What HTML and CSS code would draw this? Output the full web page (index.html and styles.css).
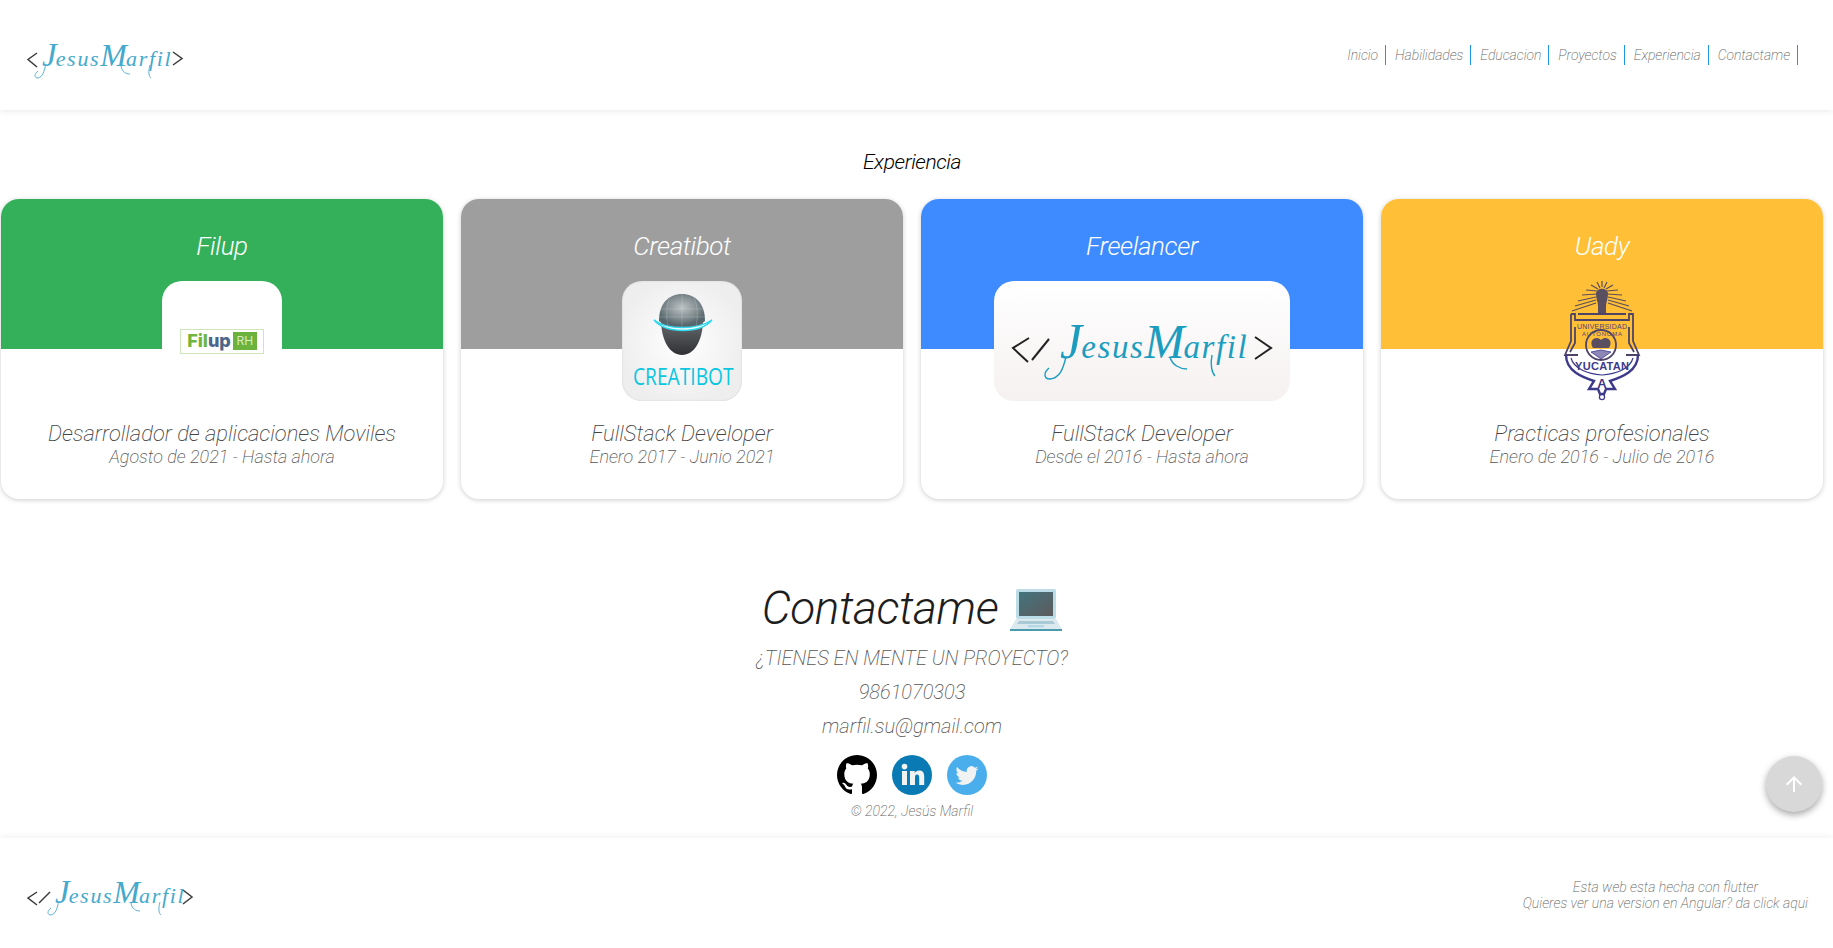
FILE: index.html
```html
<!DOCTYPE html>
<html lang="es">
<head>
<meta charset="utf-8">
<title>Jesús Marfil</title>
<link rel="stylesheet" href="styles.css">
</head>
<body>
<header class="topbar">
  <svg class="sig sig-top" viewBox="0 -8 160 48" width="160" height="48" aria-label="Jesus Marfil">
    <polyline class="chev" points="11,9 2,15.5 11,23"/>
    <polyline class="chev" points="147,8 156,14.5 147,21"/>
    <text class="sig-text" x="16" y="22" font-size="22" letter-spacing="1.7"><tspan font-size="33" letter-spacing="-1">J</tspan>esus<tspan font-size="32" letter-spacing="-1">M</tspan>arfil</text>
    <path class="sig-swash" d="M20 20 C18 27 17 33 12 34 C8 34 8 30 12 27"/>
    <path class="sig-swash" d="M124 21 C122 28 123 33 125 34 M95 22 C96 28 100 30 104 30"/>
  </svg>
  <nav class="menu">
    <a class="menu-link">Inicio</a>
    <a class="menu-link">Habilidades</a>
    <a class="menu-link">Educacion</a>
    <a class="menu-link">Proyectos</a>
    <a class="menu-link">Experiencia</a>
    <a class="menu-link">Contactame</a>
  </nav>
</header>

<main class="content">
  <h2 class="section-title">Experiencia</h2>
  <section class="cards">
    <article class="card">
      <div class="card-head head-green"><h3 class="card-title">Filup</h3></div>
      <div class="logo-box logo-white">
        <div class="filup"><span class="filup-name"><span class="filup-fil">Fil</span><span class="filup-up">up</span></span><span class="filup-rh">RH</span></div>
      </div>
      <p class="role">Desarrollador de aplicaciones Moviles</p>
      <p class="dates">Agosto de 2021 - Hasta ahora</p>
    </article>

    <article class="card">
      <div class="card-head head-grey"><h3 class="card-title">Creatibot</h3></div>
      <div class="logo-box logo-creatibot">
        <svg viewBox="0 0 120 120" width="120" height="120">
          <defs>
            <radialGradient id="dome" cx="50%" cy="42%" r="55%">
              <stop offset="0" stop-color="#bcc2c2"/><stop offset=".6" stop-color="#848f92"/><stop offset="1" stop-color="#56666c"/>
            </radialGradient>
            <linearGradient id="chin" x1="0" y1="0" x2="0" y2="1">
              <stop offset="0" stop-color="#6a6e72"/><stop offset="1" stop-color="#2f3033"/>
            </linearGradient>
          </defs>
          <path d="M39 38 C39 60 48 74 60 74 C72 74 81 60 81 38 Z" fill="url(#chin)"/>
          <path d="M37 40 C37 22 47 13 60 13 C73 13 83 22 83 40 C76 47 44 47 37 40 Z" fill="url(#dome)"/>
          <path class="dome-grid" d="M60 13 V46 M48 16 C44 26 44 36 46 45 M72 16 C76 26 76 36 74 45 M39 28 H81 M37 36 H83"/>
          <path d="M32 39 C45 49 75 49 90 39 C78 53 44 53 32 39 Z" fill="#e8fdff" stroke="#2fd8ee" stroke-width="1.4"/>
          <text class="creatibot-text" transform="translate(11 104) scale(.8 1)">CREATIBOT</text>
        </svg>
      </div>
      <p class="role">FullStack Developer</p>
      <p class="dates">Enero 2017 - Junio 2021</p>
    </article>

    <article class="card">
      <div class="card-head head-blue"><h3 class="card-title">Freelancer</h3></div>
      <div class="logo-box logo-wide">
        <svg viewBox="0 0 296 120" width="296" height="120" aria-label="Jesus Marfil">
          <polyline class="chev-big" points="35,57 19,67 34,81"/>
          <line class="chev-big" x1="38" y1="79" x2="55" y2="58"/>
          <polyline class="chev-big" points="261,56 277,67 261,78"/>
          <text class="sig-text sig-text-strong" x="66" y="77" font-size="33" letter-spacing="1.6"><tspan font-size="50" letter-spacing="-1">J</tspan>esus<tspan font-size="48" letter-spacing="-1">M</tspan>arfil</text>
          <path class="sig-swash-strong" d="M72 76 C69 88 66 97 56 98 C50 98 49 92 55 87"/>
          <path class="sig-swash-strong" d="M218 74 C216 84 218 92 221 95 M176 76 C178 84 186 88 193 88"/>
        </svg>
      </div>
      <p class="role">FullStack Developer</p>
      <p class="dates">Desde el 2016 - Hasta ahora</p>
    </article>

    <article class="card">
      <div class="card-head head-amber"><h3 class="card-title">Uady</h3></div>
      <div class="logo-box logo-clear">
        <svg class="crest" viewBox="0 0 120 120" width="120" height="120" aria-label="Universidad Autonoma de Yucatan">
          <path class="crest-rays" d="M54 22 L30 30 M54 19 L33 25 M54 16 L36 20 M55 13 L40 14 M55 10 L44 9 M56 8 L49 4 M58 7 L55 1 M60 6 V0 M62 7 L65 1 M64 8 L71 4 M65 10 L76 9 M65 13 L80 14 M66 16 L84 20 M66 19 L87 25 M66 22 L90 30"/>
          <path class="crest-fill" d="M54 13 C54 6 66 6 66 13 C66 18 64 21 64 25 V33 H56 V25 C56 21 54 18 54 13 Z"/>
          <path class="crest-line" d="M36 33 H84 M29 33 H33 V39 H87 V33 H91 V60 L97 74 H84 M29 33 V60 L23 74 H36 M33 46 V62 L28 71 M87 46 V62 L92 71"/>
          <text class="crest-text" x="60" y="48" text-anchor="middle" textLength="50" lengthAdjust="spacing">UNIVERSIDAD</text>
          <text class="crest-text crest-small" x="60" y="55" text-anchor="middle" textLength="40" lengthAdjust="spacing">AUTONOMA</text>
          <circle class="crest-line" cx="59" cy="64" r="15"/>
          <path class="crest-fill" d="M51 67 C46 59 54 54 59 59 C64 54 72 59 67 67 Z"/>
          <path class="crest-book" d="M49 71 L59 69 L69 71 L59 78 Z"/>
          <path class="crest-navy crest-thick" d="M24 74 C24 90 40 96 52 100 L47 108 H56 L58 113 H62 L64 108 H73 L68 100 C80 96 96 90 96 74"/>
          <path class="crest-navy" d="M29 77 C32 88 46 93 60 94 C74 93 88 88 91 77"/>
          <text class="crest-yuc" x="60" y="89" text-anchor="middle" textLength="54" lengthAdjust="spacing">YUCATAN</text>
          <text class="crest-a" x="60" y="107" text-anchor="middle">A</text>
          <circle class="crest-navy" cx="60" cy="116" r="2.6"/>
        </svg>
      </div>
      <p class="role">Practicas profesionales</p>
      <p class="dates">Enero de 2016 - Julio de 2016</p>
    </article>
  </section>

  <section class="contact">
    <h1 class="contact-title">
      <span>Contactame</span>
      <svg class="laptop" viewBox="0 0 52 42" width="52" height="42" aria-label="laptop">
        <defs><linearGradient id="screen" x1="0" y1="0" x2="1" y2="1"><stop offset="0" stop-color="#43747e"/><stop offset="1" stop-color="#5d5a5c"/></linearGradient></defs>
        <rect x="6" y="0" width="40" height="30" rx="2" fill="#bcdce8"/>
        <rect x="9" y="3" width="34" height="24" fill="url(#screen)"/>
        <path d="M6 30 H46 L52 40 H0 Z" fill="#dceaf0"/>
        <path d="M9 32 H43 L45 35 H7 Z" fill="#a9c9d6"/>
        <rect x="18" y="36" width="16" height="2.4" fill="#b5d8e6"/>
        <rect x="0" y="40" width="52" height="2" fill="#4b9bae"/>
      </svg>
    </h1>
    <p class="contact-line">¿TIENES EN MENTE UN PROYECTO?</p>
    <p class="contact-line">9861070303</p>
    <p class="contact-line">marfil.su@gmail.com</p>
    <div class="socials">
      <svg viewBox="0 0 16 16" width="40" height="40" aria-label="GitHub"><path fill="#000" d="M8 0C3.58 0 0 3.58 0 8c0 3.54 2.29 6.53 5.47 7.59.4.07.55-.17.55-.38 0-.19-.01-.82-.01-1.49-2.01.37-2.53-.49-2.69-.94-.09-.23-.48-.94-.82-1.13-.28-.15-.68-.52-.01-.53.63-.01 1.08.58 1.23.82.72 1.21 1.87.87 2.33.66.07-.52.28-.87.51-1.07-1.78-.2-3.64-.89-3.64-3.95 0-.87.31-1.59.82-2.15-.08-.2-.36-1.02.08-2.12 0 0 .67-.21 2.2.82.64-.18 1.32-.27 2-.27.68 0 1.36.09 2 .27 1.53-1.04 2.2-.82 2.2-.82.44 1.1.16 1.92.08 2.12.51.56.82 1.27.82 2.15 0 3.07-1.87 3.75-3.65 3.95.29.25.54.73.54 1.48 0 1.07-.01 1.93-.01 2.2 0 .21.15.46.55.38A8.013 8.013 0 0016 8c0-4.42-3.58-8-8-8z"/></svg>
      <svg viewBox="0 0 40 40" width="40" height="40" aria-label="LinkedIn"><circle cx="20" cy="20" r="20" fill="#0a7ab5"/><rect x="10" y="16" width="5" height="14" fill="#f1f2f2"/><circle cx="12.5" cy="11.6" r="2.8" fill="#f1f2f2"/><path fill="#f1f2f2" d="M18 16h4.7v2c.8-1.4 2.4-2.4 4.5-2.4 4 0 5 2.6 5 6.2V30h-5v-7.2c0-1.8-.4-3.2-2.2-3.2S23 21 23 22.8V30h-5z"/></svg>
      <svg viewBox="0 0 40 40" width="40" height="40" aria-label="Twitter"><circle cx="20" cy="20" r="20" fill="#4aaeec"/><g transform="translate(8.5 9) scale(.96)"><path fill="#f1f2f2" d="M23.953 4.57a10 10 0 01-2.825.775 4.958 4.958 0 002.163-2.723c-.951.555-2.005.959-3.127 1.184a4.92 4.92 0 00-8.384 4.482C7.69 8.095 4.067 6.13 1.64 3.162a4.822 4.822 0 00-.666 2.475c0 1.71.87 3.213 2.188 4.096a4.904 4.904 0 01-2.228-.616v.06a4.923 4.923 0 003.946 4.827 4.996 4.996 0 01-2.212.085 4.936 4.936 0 004.604 3.417 9.867 9.867 0 01-6.102 2.105c-.39 0-.779-.023-1.17-.067a13.995 13.995 0 007.557 2.209c9.053 0 13.998-7.496 13.998-13.985 0-.21 0-.42-.015-.63A9.935 9.935 0 0024 4.59z"/></g></svg>
    </div>
    <p class="copyright">© 2022, Jesús Marfil</p>
  </section>
</main>

<footer class="bottombar">
  <svg class="sig sig-bottom" viewBox="0 -8 172 50" width="172" height="50" aria-label="Jesus Marfil">
    <polyline class="chev" points="11,10 2,16 11,23"/>
    <line class="chev" x1="13" y1="21" x2="24" y2="10"/>
    <polyline class="chev" points="157,8 166,15 157,22"/>
    <text class="sig-text" x="29" y="21" font-size="22" letter-spacing="1.7"><tspan font-size="33" letter-spacing="-1">J</tspan>esus<tspan font-size="32" letter-spacing="-1">M</tspan>arfil</text>
    <path class="sig-swash" d="M33 19 C31 26 30 32 25 33 C21 33 21 29 25 26"/>
    <path class="sig-swash" d="M134 20 C132 27 133 32 135 33 M105 21 C106 27 110 29 114 29"/>
  </svg>
  <p class="made-with">Esta web esta hecha con flutter<br>Quieres ver una version en Angular? da click aqui</p>
</footer>

<button class="to-top" type="button" aria-label="Subir">
  <svg viewBox="0 0 24 24" width="24" height="24"><path fill="#fff" d="M4 12l1.41 1.41L11 7.83V20h2V7.83l5.58 5.59L20 12l-8-8-8 8z"/></svg>
</button>
</body>
</html>
```

FILE: styles.css
```css
* { box-sizing: border-box; }

html, body {
  margin: 0;
  height: 948px;
  overflow: hidden;
  background: #fff;
}

body {
  display: flex;
  flex-direction: column;
  font-family: Roboto, "Liberation Sans", sans-serif;
  font-weight: 200;
  font-style: italic;
}

h1, h2, h3, p { margin: 0; font-weight: 200; }

/* top bar */
.topbar {
  flex: none;
  height: 110px;
  display: flex;
  align-items: flex-start;
  justify-content: space-between;
  padding: 45px 35px 0 26px;
  background: #fff;
  box-shadow: 0 2px 6px rgba(0, 0, 0, .07);
  position: relative;
  z-index: 2;
}

.sig { display: block; flex: none; }
.sig-top { margin-top: -9px; }
.sig-bottom { margin-top: -8px; }

.chev, .chev-big { fill: none; stroke: #3b3b3b; stroke-width: 1.5; }
.chev-big { stroke: #222; stroke-width: 2; }

.sig-text {
  font-family: "Liberation Serif", serif;
  font-style: italic;
  font-weight: 400;
  fill: #45a9cc;
}
.sig-text-strong { fill: #1c9dc0; }
.sig-swash { fill: none; stroke: #5ab3d1; stroke-width: 1; }
.sig-swash-strong { fill: none; stroke: #1c9dc0; stroke-width: 1.4; }

.menu { display: flex; }
.menu-link {
  height: 20px;
  line-height: 20px;
  padding: 0 7px 0 9px;
  font-size: 14px;
  letter-spacing: -.05px;
  color: #666;
  border-right: 1px solid #1e96e6;
}

/* main */
.content {
  flex: 1;
  width: 1824px;
  min-height: 0;
}

.section-title {
  height: 89px;
  padding-top: 39px;
  text-align: center;
  font-size: 21px;
  line-height: 26px;
  letter-spacing: -.4px;
  color: #000;
  font-weight: 300;
}

.cards {
  display: grid;
  grid-template-columns: repeat(4, 442px);
  gap: 18px;
  padding: 0 1px;
}

.card {
  height: 300px;
  background: #fff;
  border-radius: 18px;
  overflow: hidden;
  text-align: center;
  box-shadow: 0 1px 5px rgba(0, 0, 0, .2);
}

.card-head { height: 150px; padding-top: 31px; }
.head-green { background: #34b05b; }
.head-grey { background: #9e9e9e; }
.head-blue { background: #3e8bff; }
.head-amber { background: #ffbf36; }

.card-title {
  font-size: 26px;
  line-height: 32px;
  letter-spacing: -.4px;
  color: #fff;
  font-weight: 300;
}

.logo-box {
  position: relative;
  width: 120px;
  height: 120px;
  margin: -68px auto 20px;
  border-radius: 20px;
  overflow: hidden;
}
.logo-white {
  background: #fff;
  display: flex;
  align-items: center;
  justify-content: center;
}
.logo-creatibot {
  background: radial-gradient(circle at 50% 50%, #fff 0, #eee 75%);
  box-shadow: inset 0 0 2px #ccc;
}
.logo-wide {
  width: 296px;
  background: linear-gradient(#fff, #f5f1f0);
}
.logo-clear { background: none; overflow: visible; }

.filup {
  width: 84px;
  height: 25px;
  display: flex;
  align-items: center;
  justify-content: center;
  gap: 2px;
  border: 1.5px solid #cfe6bd;
  font-family: Inter, "Liberation Sans", sans-serif;
  font-style: normal;
}
.filup-name { font-size: 18px; font-weight: 800; line-height: 20px; }
.filup-fil { color: #6fb53f; }
.filup-up { color: #4c6689; }
.filup-rh {
  width: 24px;
  height: 18px;
  line-height: 18px;
  font-size: 12px;
  font-weight: 400;
  text-align: center;
  color: #d5e9c4;
  background: #6bb33c;
}

.creatibot-text {
  font-family: "Open Sans", "Liberation Sans", sans-serif;
  font-style: normal;
  font-weight: 500;
  font-size: 24px;
  fill: #0cc6e0;
}
.dome-grid { fill: none; stroke: rgba(225, 235, 235, .35); stroke-width: .6; }

.crest-rays, .crest-line, .crest-navy {
  fill: none;
  stroke-width: 1.2;
}
.crest-rays { stroke: #5a4d5c; }
.crest-line { stroke: #4f4468; stroke-width: 1.8; }
.crest-fill { fill: #5a4f60; }
.crest-book { fill: #8d87b8; stroke: #3d3a8c; stroke-width: .8; }
.crest-navy { stroke: #3d3a8c; }
.crest-thick { stroke-width: 2.4; }
.crest-text {
  font-family: "Liberation Sans", sans-serif;
  font-style: normal;
  font-weight: 400;
  font-size: 7px;
  fill: #4d4476;
}
.crest-small { font-size: 6px; }
.crest-yuc, .crest-a {
  font-family: "Liberation Sans", sans-serif;
  font-style: normal;
  font-weight: 700;
  fill: #3d3a8c;
}
.crest-yuc { font-size: 11px; }
.crest-a { font-size: 13px; }

.role {
  font-size: 22px;
  line-height: 26px;
  color: #444;
}
.dates {
  font-size: 18px;
  line-height: 20px;
  color: #555;
}

/* contact */
.contact {
  margin-top: 80px;
  display: flex;
  flex-direction: column;
  align-items: center;
}
.contact-title {
  display: flex;
  align-items: center;
  gap: 12px;
  height: 58px;
  font-size: 46px;
  line-height: 58px;
  font-weight: 300;
  letter-spacing: -.4px;
  color: #1d1d1d;
}
.laptop { display: block; margin-top: 4px; }

.contact-line {
  height: 34px;
  line-height: 34px;
  font-size: 20px;
  color: #555;
}
.contact-line:first-of-type { margin-top: 4px; }

.socials {
  display: flex;
  gap: 15px;
  margin-top: 12px;
}
.socials svg { display: block; }

.copyright {
  margin-top: 7px;
  font-size: 14px;
  line-height: 18px;
  color: #666;
}

/* footer */
.bottombar {
  flex: none;
  height: 110px;
  display: flex;
  align-items: flex-start;
  justify-content: space-between;
  padding: 44px 25px 0 26px;
  background: #fff;
  box-shadow: 0 -2px 6px rgba(0, 0, 0, .05);
  position: relative;
}
.made-with {
  margin-top: -3px;
  font-size: 14px;
  line-height: 16px;
  text-align: center;
  color: #666;
}

.to-top {
  position: fixed;
  left: 1766px;
  top: 756px;
  width: 56px;
  height: 56px;
  padding: 0;
  border: 0;
  border-radius: 50%;
  background: #d8d8d8;
  display: flex;
  align-items: center;
  justify-content: center;
  box-shadow: 0 3px 7px rgba(0, 0, 0, .35);
}
```
